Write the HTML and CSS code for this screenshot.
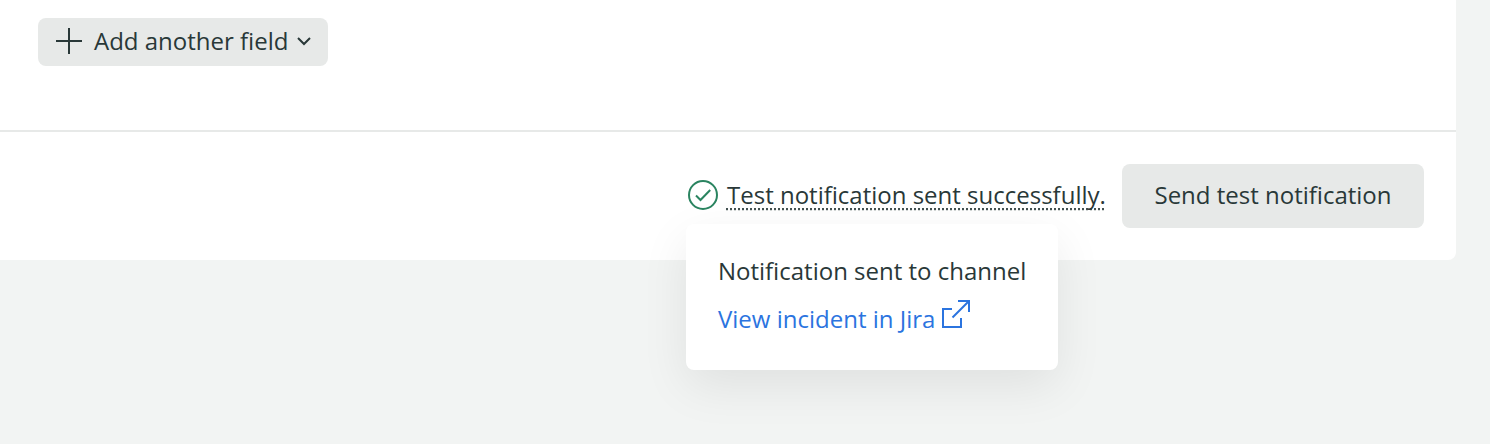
FILE: index.html
```html
<!DOCTYPE html>
<html lang="en">
<head>
<meta charset="utf-8">
<title>Test notification</title>
<link rel="stylesheet" href="styles.css">
</head>
<body>
<main class="card">
  <section class="fields">
    <button class="button add-field">
      <svg class="plus" width="26" height="26" viewBox="0 0 26 26"><path d="M13 0v26M0 13h26"/></svg>
      <span>Add another field</span>
      <svg class="chevron" width="14" height="9" viewBox="0 0 14 9"><path d="M1 1l6 6 6-6"/></svg>
    </button>
  </section>
  <footer class="actions">
    <div class="status">
      <svg class="success" width="30" height="30" viewBox="0 0 30 30"><circle cx="15" cy="15" r="14"/><path d="M8 15.500l4.500 4.500L22.200 10"/></svg>
      <span class="status-text">Test notification sent successfully.</span>
      <div class="tooltip">
        <p class="line">Notification sent to channel</p>
        <a class="line link"><span>View incident in Jira</span><svg class="external" width="28" height="28" viewBox="0 0 28 28"><path d="M10 9H1v18h18v-9M10.500 17.500L27 1M16 1h11v11"/></svg></a>
      </div>
    </div>
    <button class="button send">Send test notification</button>
  </footer>
</main>
</body>
</html>
```
FILE: styles.css
```css
* { box-sizing: border-box; }
body {
  margin: 0;
  height: 444px;
  overflow: hidden;
  background: #f2f4f3;
  color: #293838;
  font: 24px/36px "Open Sans", "Noto Sans", sans-serif;
}
svg { flex: none; fill: none; stroke: currentColor; stroke-width: 2; }
.card {
  width: 1456px;
  height: 260px;
  background: #fff;
  border-radius: 0 0 8px 0;
}
.fields { height: 130px; padding: 18px 38px; }
.button {
  border: 0;
  border-radius: 8px;
  background: #e7e9e8;
  color: inherit;
  font: inherit;
  white-space: nowrap;
}
.add-field {
  display: flex;
  align-items: center;
  width: 290px;
  height: 48px;
  padding: 0 0 2px 18px;
}
.plus { margin-right: 12px; }
.chevron { margin: 1px 0 0 9px; }
.actions {
  display: flex;
  justify-content: flex-end;
  height: 130px;
  padding: 32px;
  border-top: 2px solid #e7e9e8;
}
.status {
  position: relative;
  display: flex;
  align-items: center;
  width: 420px;
  height: 62px;
  margin-right: 16px;
  white-space: nowrap;
}
.success { margin: 0 8px 0 2px; color: #2a8460; }
.status-text {
  width: 380px;
  padding-left: 1px;
  background:
    repeating-linear-gradient(90deg, #435151 0 2px, transparent 2px 4px) 0 31px / 100% 2px no-repeat,
    repeating-linear-gradient(90deg, #d4d8d7 0 2px, transparent 2px 4px) 0 33px / 100% 1px no-repeat;
}
.tooltip {
  position: absolute;
  left: 0;
  top: 60px;
  width: 372px;
  height: 146px;
  padding: 23px 32px;
  background: #fff;
  border-radius: 8px;
  box-shadow: 0 16px 48px rgba(0, 0, 0, .08);
}
.line { display: flex; margin: 0; height: 48px; line-height: 48px; }
.link { color: #2b74df; }
.external { margin: 5px 0 0 7px; }
.send { width: 302px; height: 64px; padding: 0 0 2px; }
```
